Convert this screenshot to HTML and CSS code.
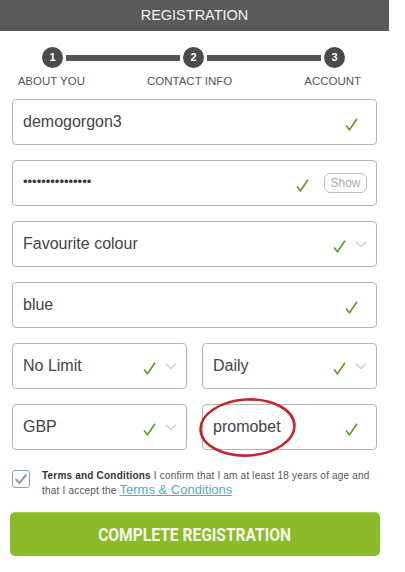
FILE: index.html
```html
<!DOCTYPE html>
<html lang="en">
<head>
<meta charset="utf-8">
<title>Registration</title>
<link rel="stylesheet" href="styles.css">
</head>
<body>
<div class="page">
  <header class="topbar">REGISTRATION</header>

  <div class="steps">
    <span class="step-dot">1</span>
    <span class="step-line"></span>
    <span class="step-dot">2</span>
    <span class="step-line"></span>
    <span class="step-dot">3</span>
  </div>
  <div class="step-labels">
    <span class="lbl lbl-1">ABOUT YOU</span>
    <span class="lbl lbl-2">CONTACT INFO</span>
    <span class="lbl lbl-3">ACCOUNT</span>
  </div>

  <form class="form">
    <div class="field">
      <span class="value">demogorgon3</span>
      <svg class="check check-solo" width="13" height="13" viewBox="0 0 13 13"><path d="M1 7.5 L4.5 11.8 L12 0.8" fill="none" stroke="#5e9c22" stroke-width="1.6"/></svg>
    </div>

    <div class="field">
      <span class="value dots">•••••••••••••••</span>
      <svg class="check" width="13" height="13" viewBox="0 0 13 13"><path d="M1 7.5 L4.5 11.8 L12 0.8" fill="none" stroke="#5e9c22" stroke-width="1.6"/></svg>
      <span class="show">Show</span>
    </div>

    <div class="field select">
      <span class="value">Favourite colour</span>
      <svg class="check" width="13" height="13" viewBox="0 0 13 13"><path d="M1 7.5 L4.5 11.8 L12 0.8" fill="none" stroke="#5e9c22" stroke-width="1.6"/></svg>
      <svg class="chev" width="12" height="7" viewBox="0 0 12 7"><path d="M0.8 0.8 L6 5.6 L11.2 0.8" fill="none" stroke="#cfcfcf" stroke-width="1.5"/></svg>
    </div>

    <div class="field">
      <span class="value">blue</span>
      <svg class="check check-solo" width="13" height="13" viewBox="0 0 13 13"><path d="M1 7.5 L4.5 11.8 L12 0.8" fill="none" stroke="#5e9c22" stroke-width="1.6"/></svg>
    </div>

    <div class="row">
      <div class="field select">
        <span class="value">No Limit</span>
        <svg class="check" width="13" height="13" viewBox="0 0 13 13"><path d="M1 7.5 L4.5 11.8 L12 0.8" fill="none" stroke="#5e9c22" stroke-width="1.6"/></svg>
        <svg class="chev" width="12" height="7" viewBox="0 0 12 7"><path d="M0.8 0.8 L6 5.6 L11.2 0.8" fill="none" stroke="#cfcfcf" stroke-width="1.5"/></svg>
      </div>
      <div class="field select">
        <span class="value">Daily</span>
        <svg class="check" width="13" height="13" viewBox="0 0 13 13"><path d="M1 7.5 L4.5 11.8 L12 0.8" fill="none" stroke="#5e9c22" stroke-width="1.6"/></svg>
        <svg class="chev" width="12" height="7" viewBox="0 0 12 7"><path d="M0.8 0.8 L6 5.6 L11.2 0.8" fill="none" stroke="#cfcfcf" stroke-width="1.5"/></svg>
      </div>
    </div>

    <div class="row">
      <div class="field select">
        <span class="value">GBP</span>
        <svg class="check" width="13" height="13" viewBox="0 0 13 13"><path d="M1 7.5 L4.5 11.8 L12 0.8" fill="none" stroke="#5e9c22" stroke-width="1.6"/></svg>
        <svg class="chev" width="12" height="7" viewBox="0 0 12 7"><path d="M0.8 0.8 L6 5.6 L11.2 0.8" fill="none" stroke="#cfcfcf" stroke-width="1.5"/></svg>
      </div>
      <div class="field promo">
        <span class="value">promobet</span>
        <svg class="check check-solo" width="13" height="13" viewBox="0 0 13 13"><path d="M1 7.5 L4.5 11.8 L12 0.8" fill="none" stroke="#5e9c22" stroke-width="1.6"/></svg>
        <svg class="circle-mark" width="100" height="62" viewBox="0 0 100 62"><ellipse cx="49.5" cy="30.5" rx="47" ry="28" fill="none" stroke="#c3262e" stroke-width="2.6" transform="rotate(-3 49.5 30.5)"/></svg>
      </div>
    </div>

    <div class="terms">
      <span class="box"><svg width="14" height="12" viewBox="0 0 14 12"><path d="M1.5 6 L5.5 10 L12.5 1.5" fill="none" stroke="#9a9a9a" stroke-width="2"/></svg></span>
      <div class="terms-text">
        <div class="t-line"><b class="t-bold">Terms and Conditions</b> <span class="t-reg">I confirm that I am at least 18 years of age and</span></div>
        <div class="t-line"><span class="t-reg">that I accept the</span> <a class="tc-link" href="#">Terms &amp; Conditions</a></div>
      </div>
    </div>

    <button type="button" class="submit"><span class="submit-label">COMPLETE REGISTRATION</span></button>
  </form>
</div>
</body>
</html>
```

FILE: styles.css
```css
* { box-sizing: border-box; }

html, body {
  margin: 0;
  padding: 0;
  background: #ffffff;
}

body {
  font-family: "Liberation Sans", Arial, sans-serif;
  color: #444;
}

.page {
  width: 389px;
}

.topbar {
  height: 31px;
  background: #5a5a5a;
  color: #f2f2f2;
  font-size: 14.5px;
  line-height: 31px;
  text-align: center;
}

.steps {
  display: flex;
  align-items: center;
  margin: 16px 0 0 42px;
  width: 303px;
  height: 21px;
}

.step-dot {
  width: 21px;
  height: 21px;
  border-radius: 50%;
  background: #4b4b4b;
  color: #fff;
  font-size: 11px;
  font-weight: bold;
  line-height: 21px;
  text-align: center;
  flex: none;
}

.step-line {
  flex: 1;
  height: 6px;
  margin: 0 3px;
  background: #555;
}

.step-labels {
  display: flex;
  margin-top: 6px;
  height: 14px;
  font-size: 11.5px;
  line-height: 14px;
  color: #555;
}

.lbl { text-align: center; }
.lbl-1 { width: 104px; }
.lbl-2 { width: 176px; }
.lbl-3 { width: 114px; }

.form {
  display: flex;
  flex-direction: column;
  gap: 15px;
  margin: 11px 12px 0 12px;
}

.row {
  display: flex;
  gap: 15px;
}

.row .field { flex: 1; }

.field {
  position: relative;
  display: flex;
  align-items: center;
  height: 46px;
  padding: 0 9px 0 10px;
  border: 1px solid #b5b5b5;
  border-radius: 4px;
  background: #fff;
}

.value {
  flex: 1;
  font-size: 16px;
  color: #444;
  white-space: nowrap;
}

.dots {
  font-size: 13px;
  letter-spacing: 0;
  color: #333;
  margin-top: -4px;
}

.check {
  flex: none;
  margin-top: 4px;
}

.check-solo { margin-right: 9px; }

.chev {
  flex: none;
  margin-left: 9px;
}

.show {
  flex: none;
  margin-left: 15px;
  width: 43px;
  height: 20px;
  border: 1px solid #bdbdbd;
  border-radius: 6px;
  font-size: 12px;
  line-height: 18px;
  color: #aaa;
  text-align: center;
}

.circle-mark {
  position: absolute;
  left: -5px;
  top: -8px;
  pointer-events: none;
}

.terms {
  display: flex;
  align-items: flex-start;
  gap: 12px;
  margin-top: 4px;
}

.box {
  flex: none;
  width: 18px;
  height: 18px;
  margin-top: 1px;
  border: 1.5px solid #83a6bb;
  border-radius: 3px;
  display: flex;
  align-items: center;
  justify-content: center;
}

.terms-text {
  font-size: 10px;
  letter-spacing: 0.2px;
  color: #555;
}

.t-line {
  height: 14px;
  line-height: 14px;
  white-space: nowrap;
}

.t-bold { color: #333; }

.tc-link {
  font-size: 13px;
  line-height: 13px;
  letter-spacing: 0;
  color: #52abc6;
  text-decoration: underline;
}

.submit {
  margin: 0 -3px 0 -2px;
  height: 44px;
  border: none;
  border-top: 1px solid #a3cb4f;
  border-radius: 5px;
  background: #8bba2b;
  color: #f6f8e6;
  font-family: Roboto, "Liberation Sans", sans-serif;
  font-weight: bold;
  font-size: 19px;
  padding: 0;
  cursor: pointer;
}

.submit-label {
  display: inline-block;
  transform: scaleX(0.82);
}
```
